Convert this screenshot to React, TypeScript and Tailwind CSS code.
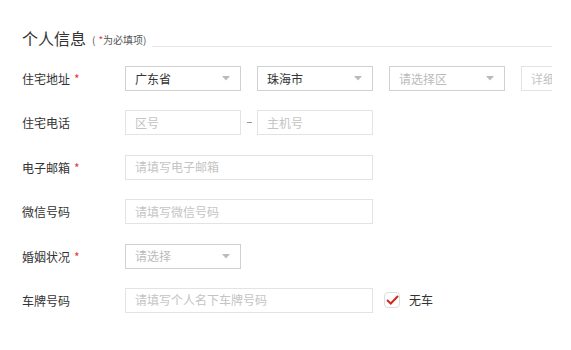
import React from "react";

const font = { fontFamily: '"Noto Sans CJK SC", "Noto Sans", sans-serif' };

function Label({ text, req }: { text: string; req?: boolean }) {
  return (
    <div className="w-[103px] shrink-0 text-[12px] leading-[25px] text-[#333]">
      {text}
      {req && <span className="ml-[4px] text-[#e4393c]">*</span>}
    </div>
  );
}

function Select({ value, placeholder, w = "w-[116px]" }: { value?: string; placeholder?: string; w?: string }) {
  return (
    <div className={`${w} h-[25px] shrink-0 border border-[#d0d0d0] bg-white flex items-center pl-[9px] pr-[10px]`}>
      <span className={`flex-1 text-[12px] ${value ? "text-[#333]" : "text-[#bbb]"}`}>{value ?? placeholder}</span>
      <svg width="8" height="5" viewBox="0 0 8 5"><path d="M0 0 L8 0 L4 4.5 Z" fill="#bbb" /></svg>
    </div>
  );
}

function Input({ placeholder, w }: { placeholder: string; w: string }) {
  return (
    <div className={`${w} h-[25px] shrink-0 border border-[#e3e3e3] bg-white flex items-center pl-[9px] text-[12px] text-[#c4c4c4] overflow-hidden whitespace-nowrap`}>
      {placeholder}
    </div>
  );
}

export default function App() {
  return (
    <div className="w-[571px] h-[350px] bg-white" style={font}>
      <div className="w-[552px] overflow-hidden pl-[22px] pt-[28px]">
        <div className="flex items-end h-[20px]">
          <span className="text-[16px] leading-[20px] text-[#333]">个人信息</span>
          <span className="ml-[6px] text-[10px] leading-[14px] text-[#555] mb-[1px]">
            (<span className="ml-[3px] text-[#e4393c]">*</span>为必填项)
          </span>
          <div className="flex-1 ml-[6px] border-b border-[#e8e8e8] mb-[1px]" />
        </div>
        <div className="mt-[18px] flex flex-col gap-[19.4px]">
          <div className="flex items-center">
            <Label text="住宅地址" req />
            <div className="flex gap-[16px] items-center">
              <Select value="广东省" />
              <Select value="珠海市" />
              <Select placeholder="请选择区" />
              <Input placeholder="详细地址" w="w-[116px]" />
            </div>
          </div>
          <div className="flex items-center">
            <Label text="住宅电话" />
            <Input placeholder="区号" w="w-[116px]" />
            <div className="w-[16px] flex justify-center">
              <div className="w-[5px] h-[1px] bg-[#999]" />
            </div>
            <Input placeholder="主机号" w="w-[116px]" />
          </div>
          <div className="flex items-center">
            <Label text="电子邮箱" req />
            <Input placeholder="请填写电子邮箱" w="w-[248px]" />
          </div>
          <div className="flex items-center">
            <Label text="微信号码" />
            <Input placeholder="请填写微信号码" w="w-[248px]" />
          </div>
          <div className="flex items-center">
            <Label text="婚姻状况" req />
            <Select placeholder="请选择" />
          </div>
          <div className="flex items-center">
            <Label text="车牌号码" />
            <Input placeholder="请填写个人名下车牌号码" w="w-[248px]" />
            <div className="ml-[11px] w-[16px] h-[16px] rounded-[4px] border border-[#ddd] flex items-center justify-center">
              <svg width="13" height="10" viewBox="0 0 13 10">
                <path d="M1 5 L4.8 8.5 L12 1" fill="none" stroke="#d7261e" strokeWidth="2" />
              </svg>
            </div>
            <span className="ml-[9px] text-[12px] text-[#333]">无车</span>
          </div>
        </div>
      </div>
    </div>
  );
}
